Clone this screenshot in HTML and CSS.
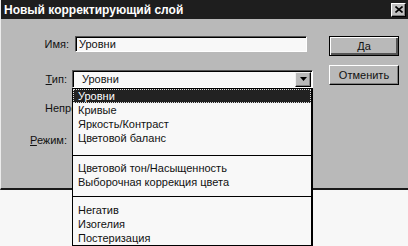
FILE: index.html
```html
<!DOCTYPE html>
<html lang="ru">
<head>
    <meta charset="UTF-8">
    <title>Новый корректирующий слой</title>
    <link rel="stylesheet" href="styles.css">
</head>
<body>
    <div class="window">
        <div class="titlebar">
            <span class="title">Новый корректирующий слой</span>
            <span class="close">
                <svg width="8" height="7" viewBox="0 0 8 7">
                    <path d="M0.5 0.5 L7.5 6.5 M7.5 0.5 L0.5 6.5" stroke="#000" stroke-width="1.6"/>
                </svg>
            </span>
        </div>
        <div class="content">
            <div class="form">
                <div class="row row-name">
                    <span class="label">Имя:</span>
                    <div class="textbox">Уровни</div>
                </div>
                <div class="row row-type">
                    <span class="label"><u>Т</u>ип:</span>
                    <div class="combo">
                        <span class="combo__value">Уровни</span>
                        <span class="combo__btn">
                            <svg width="7" height="4" viewBox="0 0 7 4"><path d="M0 0 H7 L3.5 4 Z" fill="#000"/></svg>
                        </span>
                        <!-- open list of the combo -->
                        <div class="dropdown">
                            <div class="dropdown__item selected">Уровни</div>
                            <div class="dropdown__item">Кривые</div>
                            <div class="dropdown__item">Яркость/Контраст</div>
                            <div class="dropdown__item">Цветовой баланс</div>
                            <div class="dropdown__sep"></div>
                            <div class="dropdown__item">Цветовой тон/Насыщенность</div>
                            <div class="dropdown__item">Выборочная коррекция цвета</div>
                            <div class="dropdown__sep dropdown__sep--short"></div>
                            <div class="dropdown__item">Негатив</div>
                            <div class="dropdown__item">Изогелия</div>
                            <div class="dropdown__item">Постеризация</div>
                        </div>
                    </div>
                </div>
                <div class="row row-opacity">
                    <span class="label">Непрозрачность:</span>
                </div>
                <div class="row row-mode">
                    <span class="label"><u>Р</u>ежим:</span>
                    <div class="combo combo--hidden"></div>
                </div>
            </div>
            <div class="buttons">
                <div class="btn btn--default"><span>Да</span></div>
                <div class="btn"><span>Отменить</span></div>
            </div>
        </div>
    </div>
</body>
</html>
```

FILE: styles.css
```css
* {
    margin: 0;
    padding: 0;
    box-sizing: border-box;
}

body {
    width: 408px;
    height: 246px;
    background-color: #f7f7f7;
    font-family: "Liberation Sans", Arial, sans-serif;
    font-size: 11px;
    color: #111;
    overflow: hidden;
}

.window {
    height: 190px;
    background-color: #b9b9b9;
    border-left: 1px solid #ececec;
    border-bottom: 2px solid #1a1a1a;
}

.titlebar {
    height: 19px;
    background-color: #1e1e1e;
    display: flex;
    align-items: center;
    justify-content: space-between;
    padding: 0 2px 0 3px;
}

.title {
    color: #fff;
    font-weight: bold;
    font-size: 12px;
}

.close {
    width: 15px;
    height: 14px;
    background-color: #c0c0c0;
    border: 1px solid;
    border-color: #fff #000 #000 #fff;
    box-shadow: inset -1px -1px 0 #808080;
    display: flex;
    justify-content: center;
    align-items: center;
}

.content {
    display: flex;
    justify-content: space-between;
    padding-right: 9px;
}

.form {
    width: 312px;
}

.row {
    display: flex;
    align-items: center;
}

.label {
    width: 68px;
    text-align: right;
}

.row-name {
    margin-top: 17px;
    height: 16px;
}

.row-type {
    margin-top: 18px;
    height: 18px;
}

.row-type .label,
.row-mode .label {
    width: 66px;
    margin-right: 5px;
}

.row-opacity {
    margin-top: 11px;
    height: 18px;
}

/* the rest of this label sits under the open list */
.row-opacity .label {
    width: 27px;
    margin-left: 44px;
    text-align: left;
    white-space: nowrap;
    overflow: hidden;
}

.row-mode {
    margin-top: 14px;
    height: 18px;
}

.textbox {
    flex: 1;
    height: 16px;
    margin-left: 6px;
    margin-right: 6px;
    background-color: #f8f8f8;
    border: 1px solid;
    border-color: #555 #fff #fff #555;
    box-shadow: inset 1px 1px 0 #000;
    padding-left: 3px;
    line-height: 14px;
}

.combo {
    position: relative;
    flex: 1;
    height: 18px;
    background-color: #f8f8f8;
    border: 1px solid;
    border-color: #555 #fff #fff #555;
    box-shadow: inset 1px 1px 0 #000;
    display: flex;
    align-items: center;
    justify-content: space-between;
    padding: 0 1px 0 9px;
}

.combo--hidden {
    flex: 0 0 2px;
    height: 10px;
    margin-top: 24px;
    background-color: #222;
    border: none;
    box-shadow: none;
}

.combo__btn {
    width: 16px;
    height: 15px;
    background-color: #b9b9b9;
    border: 1px solid;
    border-color: #eee #000 #000 #eee;
    box-shadow: inset -1px -1px 0 #808080;
    display: flex;
    justify-content: center;
    align-items: center;
}

.dropdown {
    position: absolute;
    top: 17px;
    left: -1px;
    width: 241px;
    height: 158px;
    background-color: #f8f8f8;
    border: 1px solid #000;
    border-right-width: 2px;
    z-index: 5;
}

.dropdown__item {
    height: 14px;
    line-height: 14px;
    padding-left: 5px;
    white-space: nowrap;
}

.dropdown__item.selected {
    background-color: #222;
    color: #fff;
    outline: 1px dotted #ddd;
    outline-offset: -1px;
}

.dropdown__sep {
    height: 11px;
    border-bottom: 1px solid #000;
    margin-bottom: 5px;
}

.dropdown__sep--short {
    height: 8px;
    margin-bottom: 6px;
}

.buttons {
    display: flex;
    flex-direction: column;
    gap: 9px;
    padding-top: 17px;
}

.btn {
    width: 70px;
    height: 20px;
    background-color: #b9b9b9;
    border: 1px solid;
    border-color: #fff #000 #000 #fff;
    box-shadow: inset -1px -1px 0 #808080;
    display: flex;
    justify-content: center;
    align-items: center;
}

.btn--default {
    border: 1px solid #000;
    box-shadow: inset 1px 1px 0 #fff, inset -2px -2px 0 #555;
}
```
